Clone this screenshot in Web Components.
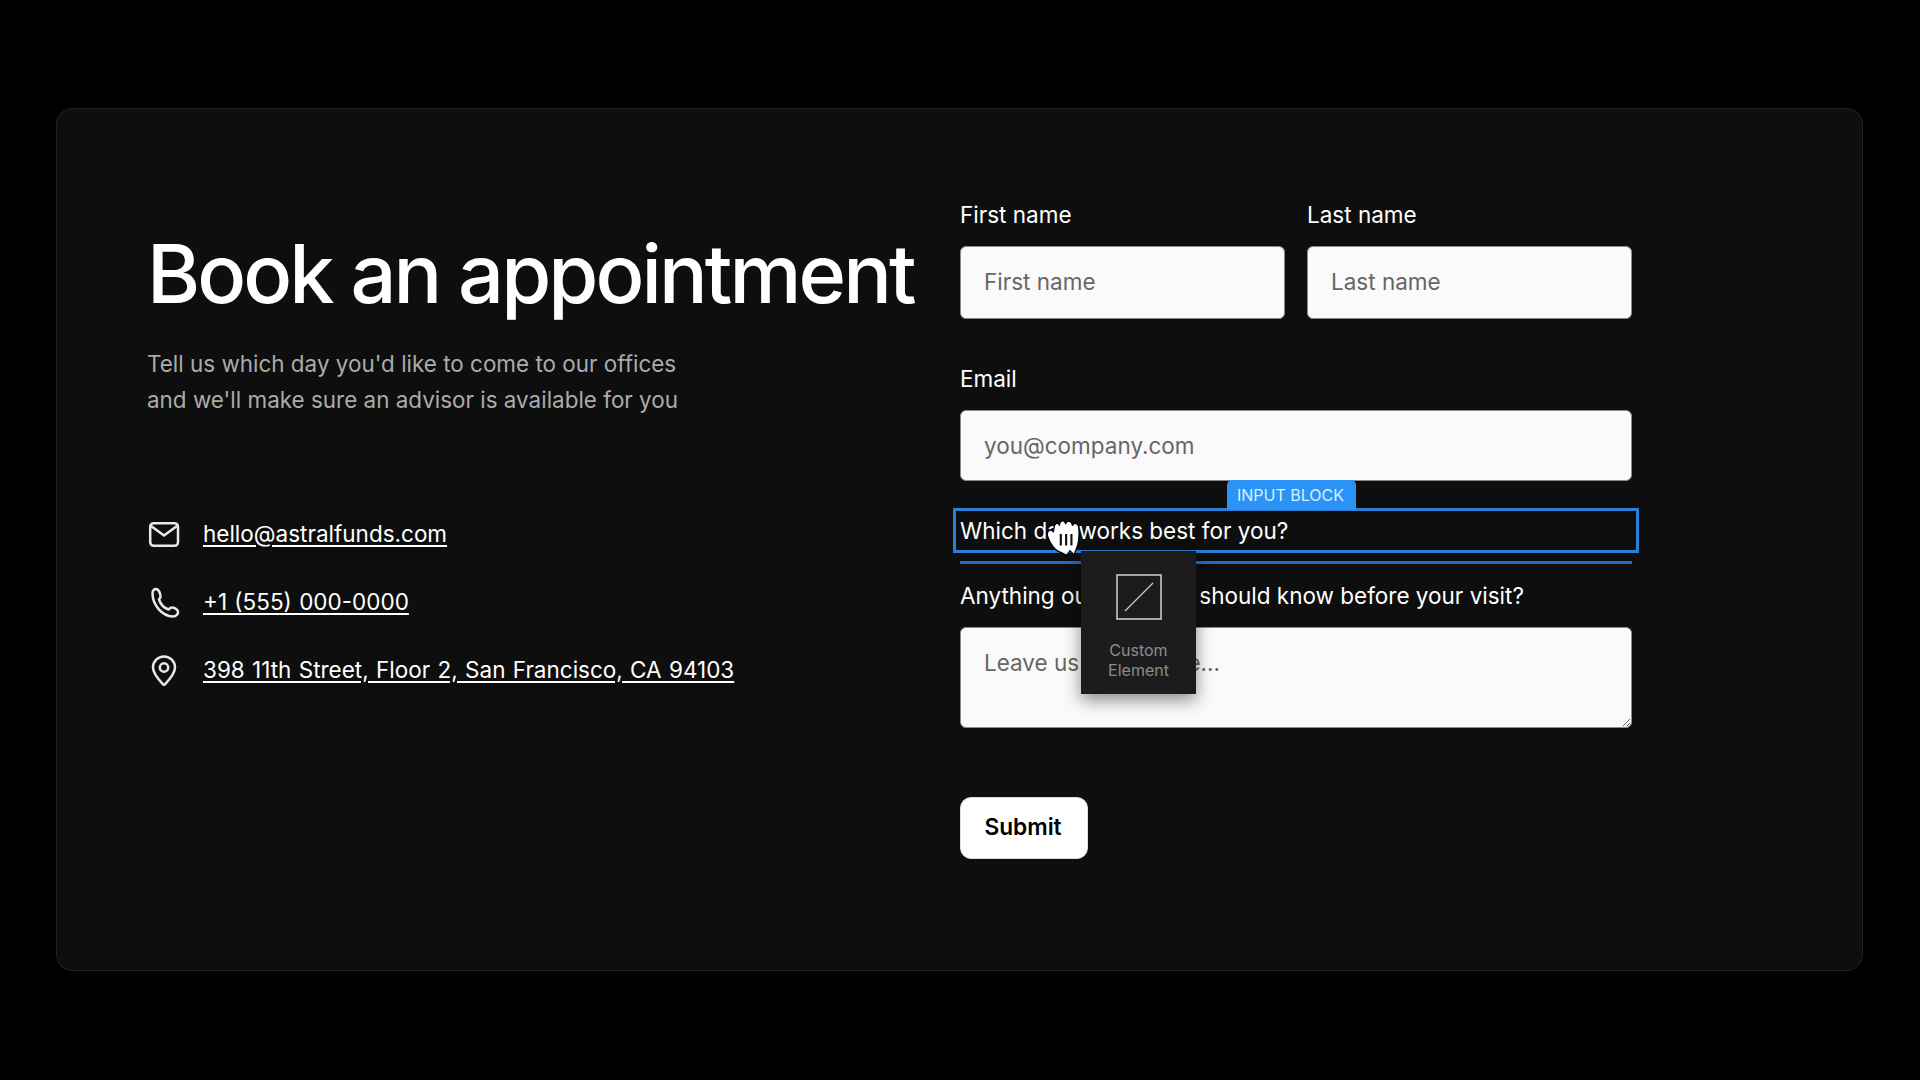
<!DOCTYPE html>
<html lang="en">
<head>
<meta charset="utf-8">
<title>Book an appointment</title>
<style>
    html, body { margin: 0; background: #000; }
    body { font-family: Inter, "Liberation Sans", sans-serif; color: #fff; }
</style>
</head>
<body>
<booking-page>
    <intro-panel slot="left">
        <contact-link kind="mail" href="#">hello@astralfunds.com</contact-link>
        <contact-link kind="phone" href="#">+1 (555) 000-0000</contact-link>
        <contact-link kind="pin" href="#">398 11th Street, Floor 2, San Francisco, CA 94103</contact-link>
    </intro-panel>
    <booking-form slot="right"></booking-form>
</booking-page>

<script>
class BookingPage extends HTMLElement {
    constructor() {
        super();
        this.attachShadow({ mode: 'open' });
    }

    connectedCallback() {
        this.shadowRoot.innerHTML = `
        <style>
            :host {
                display: block;
                box-sizing: border-box;
                width: 1920px;
                height: 1080px;
                padding: 108px 57px 109px 56px;
                background: #000;
            }
            .card {
                box-sizing: border-box;
                height: 100%;
                display: grid;
                grid-template-columns: 813px 672px;
                padding: 93px 0 0 90px;
                background: #0e0e0e;
                border: 1px solid #222;
                border-radius: 16px;
            }
        </style>
        <div class="card">
            <slot name="left"></slot>
            <slot name="right"></slot>
        </div>
        `;
    }
}

class IntroPanel extends HTMLElement {
    constructor() {
        super();
        this.attachShadow({ mode: 'open' });
    }

    connectedCallback() {
        this.shadowRoot.innerHTML = `
        <style>
            :host { display: block; }
            h1 {
                margin: 22px 0 0;
                font-size: 81px;
                line-height: 100px;
                font-weight: 450;
                letter-spacing: -2.9px;
                color: #fff;
                white-space: nowrap;
            }
            p {
                margin: 22px 0 0;
                font-size: 22.45px;
                line-height: 36px;
                color: #ababab;
            }
            .links {
                display: flex;
                flex-direction: column;
                gap: 36px;
                margin-top: 100px;
            }
        </style>
        <h1>Book an appointment</h1>
        <p>Tell us which day you'd like to come to our offices<br>and we'll make sure an advisor is available for you</p>
        <div class="links"><slot></slot></div>
        `;
    }
}

const CONTACT_ICONS = {
    mail: '<rect x="2.2" y="5.2" width="27.8" height="22.6" rx="3.5"/><path d="M3 8l13 9.5L29 8"/>',
    phone: '<path d="M4.5 7C4.5 19 14 30 25 30.5c3 0 5.500-2.500 5-5C29.500 23 26 21.500 24 21.500c-1.500 0-2.500 1-3.500 2C16 22 12.500 18 11 13.500c1-1 2-2 1.500-4C12 7 11 4 8.500 3 6.500 2.500 4.500 4.500 4.500 7z"/>',
    pin: '<path d="M27 13.500c0 6.500-7 13.500-10 16.800a1.400 1.400 0 0 1-2 0C12 27 5 20 5 13.500a11 11 0 0 1 22 0z"/><circle cx="16" cy="13.500" r="4.200"/>'
};

class ContactLink extends HTMLElement {
    constructor() {
        super();
        this.attachShadow({ mode: 'open' });
    }

    connectedCallback() {
        const icon = CONTACT_ICONS[this.getAttribute('kind')];
        this.shadowRoot.innerHTML = `
        <style>
            :host {
                display: flex;
                align-items: center;
                gap: 24px;
                height: 32px;
            }
            svg {
                width: 32px;
                height: 32px;
                fill: none;
                stroke: #e8e8e8;
                stroke-width: 2.5;
                stroke-linecap: round;
                stroke-linejoin: round;
                overflow: visible;
                flex: none;
            }
            a {
                color: #fff;
                font-size: 22.5px;
                word-spacing: 1px;
                line-height: 32px;
                text-decoration: underline;
                text-underline-offset: 3px;
            }
        </style>
        <svg viewBox="-1 0 32 32">${icon}</svg>
        <a href="${this.getAttribute('href')}"><slot></slot></a>
        `;
    }
}

class FormField extends HTMLElement {
    constructor() {
        super();
        this.attachShadow({ mode: 'open' });
    }

    connectedCallback() {
        const label = this.getAttribute('label');
        const placeholder = this.getAttribute('placeholder');
        const height = this.getAttribute('control-height') || '73';
        const control = this.hasAttribute('multiline')
            ? `<textarea placeholder="${placeholder}"></textarea>`
            : `<input type="text" placeholder="${placeholder}">`;
        this.shadowRoot.innerHTML = `
        <style>
            :host { display: block; }
            label {
                display: block;
                font-size: 22.5px;
                line-height: 26px;
                color: #fff;
                margin-bottom: 18px;
            }
            input, textarea {
                display: block;
                box-sizing: border-box;
                width: 100%;
                height: ${height}px;
                margin: 0;
                padding: 0 23px ${height === '73' ? 3 : 1}px;
                font: 22.5px/32px Inter, "Liberation Sans", sans-serif;
                color: #222;
                background: #fafafa;
                border: 1px solid #8a8a8a;
                border-radius: 6px;
                outline: none;
            }
            textarea { padding-top: 19px; }
            ::placeholder { color: #666; opacity: 1; }
        </style>
        <label>${label}</label>
        ${control}
        `;
    }
}

// The block being dragged: editor outline and its name badge lie over the label
class SelectedBlock extends HTMLElement {
    constructor() {
        super();
        this.attachShadow({ mode: 'open' });
    }

    connectedCallback() {
        this.shadowRoot.innerHTML = `
        <style>
            :host {
                display: flex;
                align-items: center;
                position: relative;
                height: 45px;
                font-size: 22.5px;
                color: #fff;
            }
            .outline {
                position: absolute;
                top: 0;
                bottom: 0;
                left: -7px;
                right: -7px;
                border: 3px solid #2b7fd6;
                pointer-events: none;
            }
            .badge {
                box-sizing: border-box;
                position: absolute;
                top: -28px;
                left: 267px;
                width: 129px;
                height: 30px;
                padding-right: 2px;
                display: flex;
                align-items: center;
                justify-content: center;
                background: #2a93f5;
                border-radius: 5px 5px 0 0;
                font-size: 16px;
                color: #dceeff;
            }
        </style>
        <slot></slot>
        <div class="outline"></div>
        <div class="badge">INPUT BLOCK</div>
        `;
    }
}

class DragPreview extends HTMLElement {
    constructor() {
        super();
        this.attachShadow({ mode: 'open' });
    }

    connectedCallback() {
        this.shadowRoot.innerHTML = `
        <style>
            :host {
                position: absolute;
                left: 121px;
                top: 349px;
                width: 115px;
                height: 143px;
                box-sizing: border-box;
                display: flex;
                flex-direction: column;
                align-items: center;
                padding-top: 23px;
                background: #1c1c1c;
                box-shadow: 0 6px 16px rgba(0, 0, 0, 0.45);
            }
            svg { width: 46px; height: 46px; flex: none; }
            span {
                margin-top: 21px;
                text-align: center;
                font-size: 16px;
                line-height: 19.500px;
                color: #8c8c8c;
            }
        </style>
        <svg viewBox="0 0 46 46" fill="none" stroke="#c8c8c8">
            <rect x="1" y="1" width="44" height="44" stroke-width="1.6"/>
            <path d="M9 37 37 9" stroke-width="1.2"/>
        </svg>
        <span>Custom<br>Element</span>
        `;
    }
}

class GrabCursor extends HTMLElement {
    constructor() {
        super();
        this.attachShadow({ mode: 'open' });
    }

    connectedCallback() {
        this.shadowRoot.innerHTML = `
        <style>
            :host {
                position: absolute;
                left: 87px;
                top: 317px;
                width: 34px;
                height: 37px;
            }
            svg { display: block; width: 34px; height: 37px; overflow: visible; }
        </style>
        <svg viewBox="0 0 32 32" preserveAspectRatio="none">
            <path d="M.5 15C-.5 10 3 8 6 11l.5-3C7 3 10.500 2.500 11.500 5.500c1-5 5-5 6-1.500 2-3.500 6-2.500 6.500 1.500 1.500-3 6-2 6 2.500.5 6 0 13-2.500 18l-2 5-4-3.500-3 4-5-2.500C8 28 3 22 .5 15z" fill="#fff" stroke="#000" stroke-width="1.200" stroke-linejoin="round"/>
            <path d="M13 13v10M18 13v10M23 13v10" stroke="#111" stroke-width="2"/>
        </svg>
        `;
    }
}

class BookingForm extends HTMLElement {
    constructor() {
        super();
        this.attachShadow({ mode: 'open' });
    }

    connectedCallback() {
        this.shadowRoot.innerHTML = `
        <style>
            :host {
                display: block;
                position: relative;
            }
            .row {
                display: grid;
                grid-template-columns: 1fr 1fr;
                gap: 22px;
            }
            .email { margin-top: 47px; }
            selected-block { margin-top: 27px; }
            .drop-line {
                height: 3px;
                margin-top: 8px;
                background: #1f6fc4;
            }
            .message { margin-top: 19px; }
            button {
                display: block;
                width: 128px;
                height: 62px;
                margin-top: 69px;
                padding: 0 2px 4px 0;
                font: 600 22.7px Inter, "Liberation Sans", sans-serif;
                color: #000;
                background: #fff;
                border: 1px solid #ddd;
                border-radius: 11px;
            }
        </style>
        <div class="row">
            <form-field label="First name" placeholder="First name"></form-field>
            <form-field label="Last name" placeholder="Last name"></form-field>
        </div>
        <form-field class="email" label="Email" placeholder="you@company.com" control-height="71"></form-field>
        <selected-block>Which day works best for you?</selected-block>
        <div class="drop-line"></div>
        <form-field class="message" multiline label="Anything our advisors should know before your visit?" placeholder="Leave us a message..." control-height="101"></form-field>
        <button type="button">Submit</button>
        <drag-preview></drag-preview>
        <grab-cursor></grab-cursor>
        `;
    }
}

customElements.define('booking-page', BookingPage);
customElements.define('intro-panel', IntroPanel);
customElements.define('contact-link', ContactLink);
customElements.define('form-field', FormField);
customElements.define('selected-block', SelectedBlock);
customElements.define('drag-preview', DragPreview);
customElements.define('grab-cursor', GrabCursor);
customElements.define('booking-form', BookingForm);
</script>
</body>
</html>
